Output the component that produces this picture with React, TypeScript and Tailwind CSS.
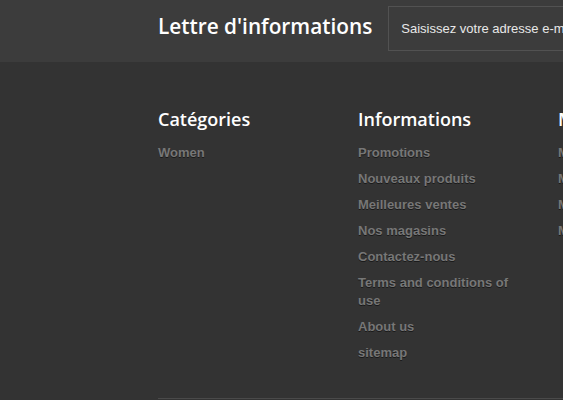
import React from 'react';

const COLUMNS = [
  { title: 'Catégories', links: ['Women'] },
  {
    title: 'Informations',
    links: [
      'Promotions',
      'Nouveaux produits',
      'Meilleures ventes',
      'Nos magasins',
      'Contactez-nous',
      'Terms and conditions of use',
      'About us',
      'sitemap',
    ],
  },
  {
    title: 'Mon compte',
    links: ['Mes commandes', 'Mes avoirs', 'Mes adresses', 'Mes informations'],
  },
];

export default function App() {
  return (
    <div className="w-[563px] h-[400px] overflow-hidden bg-[#333333]">
      {/* newsletter band */}
      <div className="h-[62px] bg-[#3c3c3c] pl-[158px] pt-[6px] flex items-start">
        <h2 className="font-['Open_Sans',sans-serif] font-semibold text-[20.8px] leading-[40px] text-white whitespace-nowrap shrink-0">
          Lettre d'informations
        </h2>
        <div className="ml-[16px] shrink-0 w-[300px] h-[45px] border border-[#525252] bg-[#3c3c3c] flex items-center pl-[12px]">
          <span className="font-['Liberation_Sans',Arial,sans-serif] text-[13px] text-[#e8e8e8] whitespace-nowrap">
            Saisissez votre adresse e-mail
          </span>
        </div>
      </div>

      {/* footer columns */}
      <div className="pl-[158px] pt-[45px] flex h-[337px]">
        {COLUMNS.map((col) => (
          <div key={col.title} className="w-[200px] shrink-0 pr-[30px]">
            <h4 className="font-['Open_Sans',sans-serif] font-semibold text-[18px] leading-[24px] text-white whitespace-nowrap mb-[13px]">
              {col.title}
            </h4>
            <ul className="flex flex-col gap-[8px]">
              {col.links.map((l) => (
                <li
                  key={l}
                  className="font-['Liberation_Sans',Arial,sans-serif] font-bold text-[13px] leading-[18px] text-[#777777] [text-shadow:0_1px_0_#1a1a1a]"
                >
                  {l}
                </li>
              ))}
            </ul>
          </div>
        ))}
      </div>
      <div className="ml-[158px] h-px bg-[#4a4a4a] -mt-px" />
    </div>
  );
}
